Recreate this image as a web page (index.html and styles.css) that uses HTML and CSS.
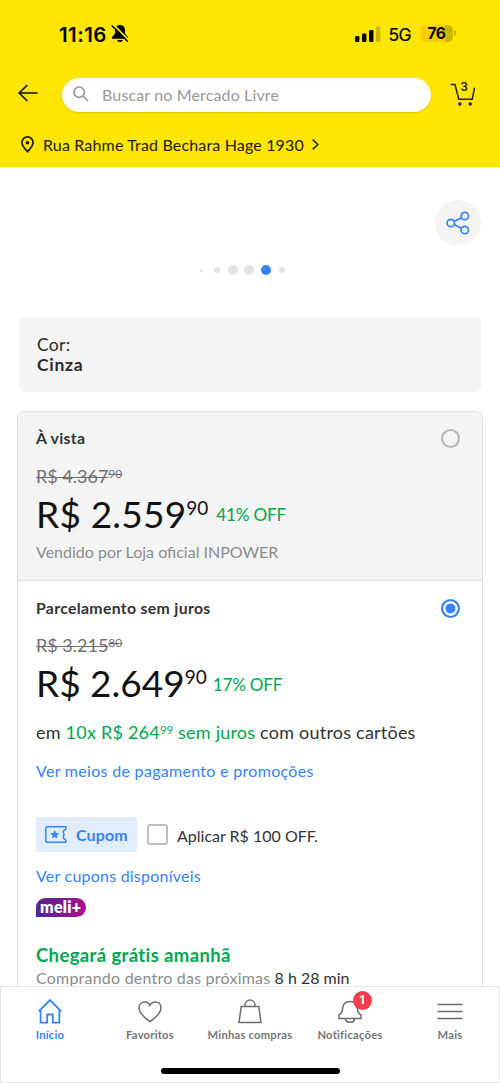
FILE: index.html
```html
<!DOCTYPE html>
<html lang="pt-BR">
<head>
<meta charset="utf-8">
<title>Mercado Livre</title>
<link rel="stylesheet" href="styles.css">
</head>
<body>
<div class="screen">
  <header class="header">
    <div class="status">
      <div class="status-left">
        <span class="clock">11:16</span>
        <svg class="mute" width="18" height="19" viewBox="0 0 18 19"><path d="M9 1C6 1 4 3.2 4 6.2V9.500L1 13.200V14.800H17V13.200L14 9.500V6.200C14 3.200 12 1 9 1Z"/><path d="M6 16H12C11.500 18.500 6.500 18.500 6 16Z"/><path d="M2.200.3 18 16.500" stroke="#ffe600" stroke-width="1.700"/><path d="M.7 1.500 16.800 17.600" stroke="#000" stroke-width="1.400"/></svg>
      </div>
      <div class="status-right">
        <svg width="26" height="17" viewBox="0 0 26 17"><rect x="0" y="10" width="4.400" height="6" rx="1.200"/><rect x="7" y="7.500" width="4.400" height="8.500" rx="1.200"/><rect x="14" y="4" width="4.400" height="12" rx="1.200"/><rect x="21" y="0.500" width="4.400" height="15.500" rx="1.200" fill="#ccb800"/></svg>
        <span class="network">5G</span>
        <span class="battery"><span class="battery-body">76</span><span class="battery-cap"></span></span>
      </div>
    </div>
    <div class="search-row">
      <svg class="back" width="20" height="18" viewBox="0 0 20 18"><path d="M9.300 1 1.200 9l8.100 8M1.200 9H19.600" fill="none" stroke="#111" stroke-width="1.700"/></svg>
      <div class="search">
        <svg width="16" height="16" viewBox="0 0 16 16" fill="none" stroke="#999" stroke-width="1.700"><circle cx="6.200" cy="6.200" r="5.200"/><path d="m10 10 5 5"/></svg>
        <span>Buscar no Mercado Livre</span>
      </div>
      <div class="cart">
        <svg width="26" height="24" viewBox="0 0 26 24"><path d="M.5 1.600H5L8.800 16.200H22.300L24.500 4.600" fill="none" stroke="#222" stroke-width="1.500"/><circle cx="9.900" cy="21" r="1.800" fill="#222"/><circle cx="20.200" cy="21" r="1.800" fill="#222"/></svg>
        <span class="cart-count">3</span>
      </div>
    </div>
    <div class="address">
      <svg width="13" height="17" viewBox="0 0 13 17"><path d="M6.500 15.700C3 12 .9 9.300.9 6.500a5.600 5.600 0 0 1 11.200 0C12.100 9.300 10 12 6.500 15.700Z" fill="none" stroke="#1c1c00" stroke-width="1.700"/><circle cx="6.500" cy="6.700" r="1.800" fill="#1c1c00"/></svg>
      <span>Rua Rahme Trad Bechara Hage 1930</span>
      <svg class="chevron" width="7" height="11" viewBox="0 0 7 11"><path d="m.7.6 5.100 4.900L.7 10.400" fill="none" stroke="#1c1c00" stroke-width="1.500"/></svg>
    </div>
  </header>

  <main class="content">
    <section class="gallery">
      <div class="share">
        <svg width="24" height="24" viewBox="0 0 24 24" fill="none" stroke="#3483fa" stroke-width="1.700"><circle cx="4.800" cy="12" r="3.700"/><circle cx="18.800" cy="5" r="3.700"/><circle cx="18.800" cy="19" r="3.700"/><path d="m8.200 10.400 7.200-3.700M8.200 13.600l7.200 3.700"/></svg>
      </div>
      <div class="dots">
        <i class="dot tiny"></i><i class="dot small"></i><i class="dot"></i><i class="dot"></i><i class="dot active"></i><i class="dot small"></i>
      </div>
    </section>

    <section class="color-card">
      <span>Cor:</span>
      <strong>Cinza</strong>
    </section>

    <section class="options">
      <article class="option cash">
        <div class="option-head"><h2>À vista</h2><span class="radio"></span></div>
        <div class="old-price">R$ 4.367<sup>90</sup></div>
        <div class="price-row"><span class="price">R$ 2.559<sup>90</sup></span><span class="off">41% OFF</span></div>
        <div class="seller">Vendido por Loja oficial INPOWER</div>
      </article>
      <article class="option installment">
        <div class="option-head"><h2>Parcelamento sem juros</h2><span class="radio checked"></span></div>
        <div class="old-price">R$ 3.215<sup>80</sup></div>
        <div class="price-row"><span class="price">R$ 2.649<sup>90</sup></span><span class="off">17% OFF</span></div>
        <div class="installments">em <span class="green">10x R$ 264<sup>99</sup> sem juros</span> com outros cartões</div>
        <a class="link methods">Ver meios de pagamento e promoções</a>
        <div class="coupon-row">
          <span class="coupon">
            <svg width="22" height="17" viewBox="0 0 22 17"><path d="M2.300.8H20.700V3.200C17.800 4.200 17.800 7.200 19.200 8.500C17.800 9.800 17.800 12.800 20.700 13.800V16.200H2.300Q.8 16.200.8 14.700V2.300Q.8.800 2.300.8Z" fill="none" stroke="#3483fa" stroke-width="1.500"/><path d="m9.700 4 1.300 3 3.200.3-2.400 2.100.7 3.200-2.800-1.700-2.800 1.700.7-3.200-2.400-2.100 3.200-.3Z" fill="#3483fa"/></svg>
            <span>Cupom</span>
          </span>
          <span class="checkbox"></span>
          <span class="apply">Aplicar R$ 100 OFF.</span>
        </div>
        <a class="link coupons">Ver cupons disponíveis</a>
        <span class="meli">meli+</span>
        <div class="delivery">Chegará grátis amanhã</div>
        <div class="deadline"><span class="muted">Comprando dentro das próximas</span> 8 h 28 min</div>
      </article>
    </section>
  </main>

  <nav class="tabs">
    <div class="tab-list">
      <a class="tab current"><svg width="26" height="26" viewBox="0 0 26 26"><path d="M1.800 13.300 13 2 24.200 13.300M3.600 11.500V24.700H10.200V16.500H15.800V24.700H22.400V11.500"/></svg><span>Início</span></a>
      <a class="tab"><svg width="26" height="26" viewBox="0 0 26 26"><path d="M13 23.700C6.500 19 2 14.500 2 10 2 6.200 4.500 4 7.500 4 10 4 12 5.300 13 7.300 14 5.300 16 4 18.500 4 21.500 4 24 6.200 24 10 24 14.500 19.500 19 13 23.700Z"/></svg><span>Favoritos</span></a>
      <a class="tab"><svg width="26" height="26" viewBox="0 0 26 26"><path d="M4.200 8.500H21.800L24 24.500H2ZM8 8.500V7.500C8 .3 18 .3 18 7.500V8.500"/></svg><span>Minhas compras</span></a>
      <a class="tab"><svg width="26" height="26" viewBox="0 0 26 26"><path d="M2 20.500V17C4.500 15.500 5.500 14 5.500 11.300 5.500 6.500 8.500 3.500 13 3.500 17.500 3.500 20.500 6.500 20.500 11.300 20.500 14 21.500 15.500 24 17V20.500ZM8.500 20.500C8.500 25.500 17.500 25.500 17.500 20.500"/></svg><span>Notificações</span><b class="badge">1</b></a>
      <a class="tab"><svg width="26" height="26" viewBox="0 0 26 26"><path d="M.5 6.500H25.500M.5 13.500H25.500M.5 20.500H25.500"/></svg><span>Mais</span></a>
    </div>
    <div class="home-indicator"></div>
  </nav>
</div>
</body>
</html>
```
FILE: styles.css
```css
* { box-sizing: border-box; }
body { margin: 0; background: #fff; font-family: Lato, "Open Sans", sans-serif; color: #333; }
svg { display: block; flex: none; }
h2 { margin: 0; }

.screen { width: 500px; height: 1083px; display: flex; flex-direction: column; overflow: hidden; }

/* Header */
.header { height: 167px; flex: none; background: #ffe600; padding-top: 22px; }
.status { height: 24px; display: flex; justify-content: space-between; align-items: center; padding: 0 44px 0 59px; font-family: Inter, sans-serif; color: #000; }
.status-left, .status-right { display: flex; align-items: center; }
.clock { font-size: 20.5px; font-weight: 600; letter-spacing: .45px; }
.mute { margin-left: 4px; margin-top: -2px; }
.network { font-size: 17.5px; margin-left: 8px; letter-spacing: -.6px; -webkit-text-stroke: .2px #000; }
.battery { display: flex; align-items: center; gap: 1px; margin-left: 9px; margin-top: -2px; }
.battery-body { width: 33px; height: 17px; border-radius: 5.5px; background: linear-gradient(90deg, #ffcc00 25px, #ccb800 25px); font-size: 15.5px; font-weight: 700; line-height: 17px; text-align: center; letter-spacing: -.3px; }
.battery-cap { width: 2px; height: 6px; border-radius: 0 3px 3px 0; background: #ccb800; }

.search-row { display: flex; align-items: center; margin-top: 31.5px; height: 35px; padding-left: 18px; }
.search { width: 369px; height: 34px; margin-left: 23.5px; padding-left: 11px; border-radius: 18px; background: #fff; box-shadow: 0 1px 2px rgba(0, 0, 0, .13); display: flex; align-items: center; gap: 13.5px; color: #999; font-size: 16px; letter-spacing: .14px; line-height: 34px; }
.search svg { margin-top: -3px; }
.back { margin-top: -4px; }
.cart { position: relative; margin-left: 19px; margin-top: -1px; }
.cart-count { position: absolute; left: 0; top: -4px; width: 29px; text-align: center; font: 600 12px/16px Inter, sans-serif; color: #222; }

.address { display: flex; align-items: center; height: 22px; margin-top: 21px; padding-left: 21px; font-size: 16px; letter-spacing: .16px; color: #1c1c00; }
.address span { margin-left: 9px; }
.chevron { margin-left: 8px; }

/* Content */
.content { flex: 1; min-height: 0; overflow: hidden; padding: 0 18px; }
.gallery { height: 150px; padding-top: 33px; display: flex; flex-direction: column; }
.share { width: 46px; height: 46px; margin-left: auto; margin-right: 1px; border-radius: 50%; background: #f4f4f4; display: flex; align-items: center; justify-content: center; }
.dots { display: flex; align-items: center; height: 10px; margin: 19px 0 0 181.5px; gap: 6.3px; }
.dot { width: 10px; height: 10px; border-radius: 50%; background: #e3e3e3; flex: none; }
.dot.small { width: 6px; height: 6px; margin: 0 2px; }
.dot.tiny { width: 3px; height: 3px; margin-right: 3px; }
.dot.active { background: #3483fa; }

.color-card { height: 75px; margin: 0 1px 19px; padding: 18px 18px; border-radius: 6px; background: #f4f4f4; display: flex; flex-direction: column; font-size: 17.5px; line-height: 20px; color: #2b2b2b; letter-spacing: .3px; }
.color-card strong { font-weight: 700; font-size: 17.5px; letter-spacing: .7px; line-height: 19px; }

.options { margin: 0 -1px; border: 1.5px solid #ddd; border-bottom: 0; border-radius: 7px 7px 0 0; overflow: hidden; }
.option { padding: 17px 22px 0 18px; }
.option.cash { height: 169px; padding-top: 16px; background: #f4f4f4; border-bottom: 1.5px solid #ddd; }
.option-head { display: flex; justify-content: space-between; align-items: center; height: 20px; }
.option-head h2 { margin-top: -1px; font-size: 15.8px; font-weight: 700; letter-spacing: .33px; color: #333; }
.radio { width: 19px; height: 19px; border: 2.5px solid #b5b5b5; border-radius: 50%; }
.radio.checked { border: 2px solid #3483fa; background: #3483fa; box-shadow: inset 0 0 0 2.5px #fff; }
sup { font-size: .63em; line-height: 0; vertical-align: .45em; }
.old-price { height: 20px; margin-top: 17px; font-size: 18px; line-height: 20px; color: #707070; text-decoration: line-through; text-decoration-thickness: 1px; }
/* The raised cents carry their own strike, so the inherited one is not drawn over them */
.old-price sup { display: inline-block; font-size: 12px; line-height: 12px; vertical-align: 5px; text-decoration: line-through; text-decoration-thickness: 1px; }
.cash .old-price { margin-top: 18px; }
.price-row { display: flex; height: 40px; margin-top: 8px; line-height: 40px; }
.price { font-size: 37px; color: #111; }
.price sup { font-size: 19px; vertical-align: 13px; letter-spacing: 0; }
.cash .price { letter-spacing: .2px; }
.off { margin-left: 8px; font-size: 17.2px; color: #00a650; letter-spacing: -.25px; line-height: 42px; }
.installment .off { margin-left: 6px; line-height: 43px; }
.seller { margin-top: 8px; font-size: 16px; line-height: 20px; color: #8c8c8c; }

.installments { margin-top: 18px; font-size: 18px; line-height: 22px; letter-spacing: .22px; white-space: nowrap; }
.installments sup { font-size: 11.5px; letter-spacing: 0; vertical-align: 5px; }
.green { color: #00a650; }
.link { display: block; color: #3483fa; font-size: 16px; line-height: 20px; letter-spacing: .3px; }
.methods { margin-top: 18px; }
.coupon-row { display: flex; align-items: center; height: 35px; margin-top: 36px; }
.coupon { display: flex; align-items: center; gap: 9px; width: 101px; height: 35px; padding-left: 9px; border-radius: 3px; background: #e1edfb; color: #3483fa; font-size: 16px; font-weight: 700; letter-spacing: .1px; }
.checkbox { width: 21px; height: 21px; margin-left: 10px; border: 2px solid #bfbfbf; border-radius: 3px; }
.apply { margin: 2px 0 0 9px; font-size: 16px; }
.coupons { margin-top: 14px; letter-spacing: .22px; }
.meli { display: block; width: 50px; height: 19px; margin-top: 12px; padding-left: 4px; border-radius: 10px 10px 10px 0; background: linear-gradient(90deg, #4f2790, #a90f90); color: #fff; font-size: 16px; font-weight: 800; line-height: 18px; letter-spacing: .3px; }
.delivery { margin-top: 27px; color: #00a650; font-size: 18.5px; font-weight: 700; line-height: 22px; letter-spacing: .38px; }
.deadline { margin-top: 1px; font-size: 16px; line-height: 22px; white-space: nowrap; }
.muted { color: #8c8c8c; letter-spacing: .22px; }

/* Bottom navigation */
.tabs { height: 97px; flex: none; border: 1px solid #e3e3e3; background: #fff; }
.tab-list { display: flex; height: 81px; margin: 0 -1px; }
.tab { position: relative; width: 100px; padding-top: 11px; display: flex; flex-direction: column; align-items: center; color: #757575; font-size: 11.2px; font-weight: 700; line-height: 14px; letter-spacing: .24px; white-space: nowrap; }
.tab svg { fill: none; stroke: #6c6c6c; stroke-width: 1.5; }
.tab span { margin-top: 4px; }
.tab.current { color: #3483fa; }
.tab.current svg { stroke: #3483fa; stroke-width: 1.8; }
.badge { position: absolute; left: 53px; top: 4px; width: 19px; height: 19px; border-radius: 50%; background: #f23d4f; color: #fff; font: 700 12px/19px Roboto, sans-serif; text-align: center; letter-spacing: 0; }
.home-indicator { width: 179px; height: 6px; margin: 0 auto; border-radius: 3px; background: #000; }
```
